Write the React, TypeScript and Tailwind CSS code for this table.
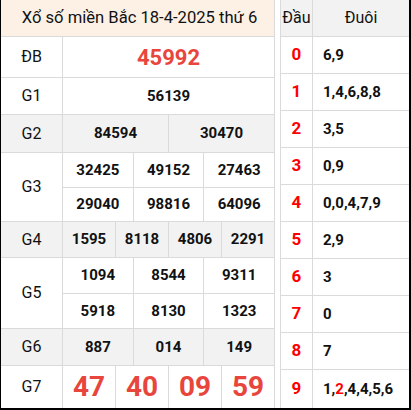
const font = { fontFamily: 'Roboto, "Liberation Sans", sans-serif' };

type Row = { label: string; h: string; bg?: boolean; lines: string[][]; big?: 'db' | 'g7' };

const rows: Row[] = [
  { label: 'ĐB', h: 'h-[41px]', lines: [['45992']], big: 'db' },
  { label: 'G1', h: 'h-[37px]', lines: [['56139']] },
  { label: 'G2', h: 'h-[38px]', bg: true, lines: [['84594', '30470']] },
  { label: 'G3', h: 'h-[69px]', lines: [['32425', '49152', '27463'], ['29040', '98816', '64096']] },
  { label: 'G4', h: 'h-[36px]', bg: true, lines: [['1595', '8118', '4806', '2291']] },
  { label: 'G5', h: 'h-[71px]', lines: [['1094', '8544', '9311'], ['5918', '8130', '1323']] },
  { label: 'G6', h: 'h-[37px]', bg: true, lines: [['887', '014', '149']] },
  { label: 'G7', h: 'h-[42px]', lines: [['47', '40', '09', '59']], big: 'g7' },
];

const loto: [string, React.ReactNode][] = [
  ['0', '6,9'],
  ['1', '1,4,6,8,8'],
  ['2', '3,5'],
  ['3', '0,9'],
  ['4', '0,0,4,7,9'],
  ['5', '2,9'],
  ['6', '3'],
  ['7', '0'],
  ['8', '7'],
  ['9', <>1,<span className="text-[#ff0000]">2</span>,4,4,5,6</>],
];

function PrizeRow({ row, last }: { row: Row; last: boolean }) {
  const numClass =
    row.big === 'db'
      ? 'text-[22px] font-bold text-[#e8453c]'
      : row.big === 'g7'
        ? 'text-[28px] font-bold text-[#e8453c]'
        : 'text-[15px] font-bold text-[#111]';
  return (
    <div className={`flex ${row.h} ${last ? '' : 'border-b border-[#dadada]'} ${row.bg ? 'bg-[#f2f2f2]' : 'bg-white'}`}>
      <div className="w-[62px] shrink-0 flex items-center justify-center border-r border-[#dadada] text-[16px] text-[#111]">
        {row.label}
      </div>
      <div className="flex-1 flex flex-col">
        {row.lines.map((line, i) => (
          <div key={i} className={`flex flex-1 ${i < row.lines.length - 1 ? 'border-b border-[#dadada]' : ''}`}>
            {line.map((n, j) => (
              <div
                key={j}
                className={`flex-1 flex items-center justify-center ${numClass} ${j < line.length - 1 ? 'border-r border-[#dadada]' : ''}`}
              >
                {n}
              </div>
            ))}
          </div>
        ))}
      </div>
    </div>
  );
}

export default function App() {
  return (
    <div style={font} className="w-[411px] h-[410px] flex bg-white border-l border-r-2 border-b-2 border-black">
      <div className="w-[274px] shrink-0 flex flex-col border-r border-[#dadada]">
        <div className="h-[37px] flex items-center justify-center pl-[4px] bg-[#fdf1e6] border-b border-[#dadada] text-[16.6px] text-[#111]">
          Xổ số miền Bắc 18-4-2025 thứ 6
        </div>
        {rows.map((r, i) => (
          <PrizeRow key={r.label} row={r} last={i === rows.length - 1} />
        ))}
      </div>
      <div className="w-[5px] shrink-0" />
      <div className="flex-1 flex flex-col border-l border-[#dadada]">
        <div className="h-[37px] flex bg-[#f2f2f2] border-b border-[#dadada] text-[16px] text-[#111]">
          <div className="w-[32px] flex items-center justify-center border-r border-[#dadada]">Đầu</div>
          <div className="flex-1 flex items-center justify-center">Đuôi</div>
        </div>
        {loto.map(([d, t], i) => (
          <div key={d} className={`flex ${i === loto.length - 1 ? 'flex-1' : 'h-[37px] border-b border-[#dadada]'}`}>
            <div className="w-[32px] flex items-center justify-center border-r border-[#dadada] text-[17px] font-bold text-[#ff0000]">
              {d}
            </div>
            <div className="flex-1 flex items-center pl-[10px] text-[15px] font-bold text-[#111]">{t}</div>
          </div>
        ))}
      </div>
    </div>
  );
}
